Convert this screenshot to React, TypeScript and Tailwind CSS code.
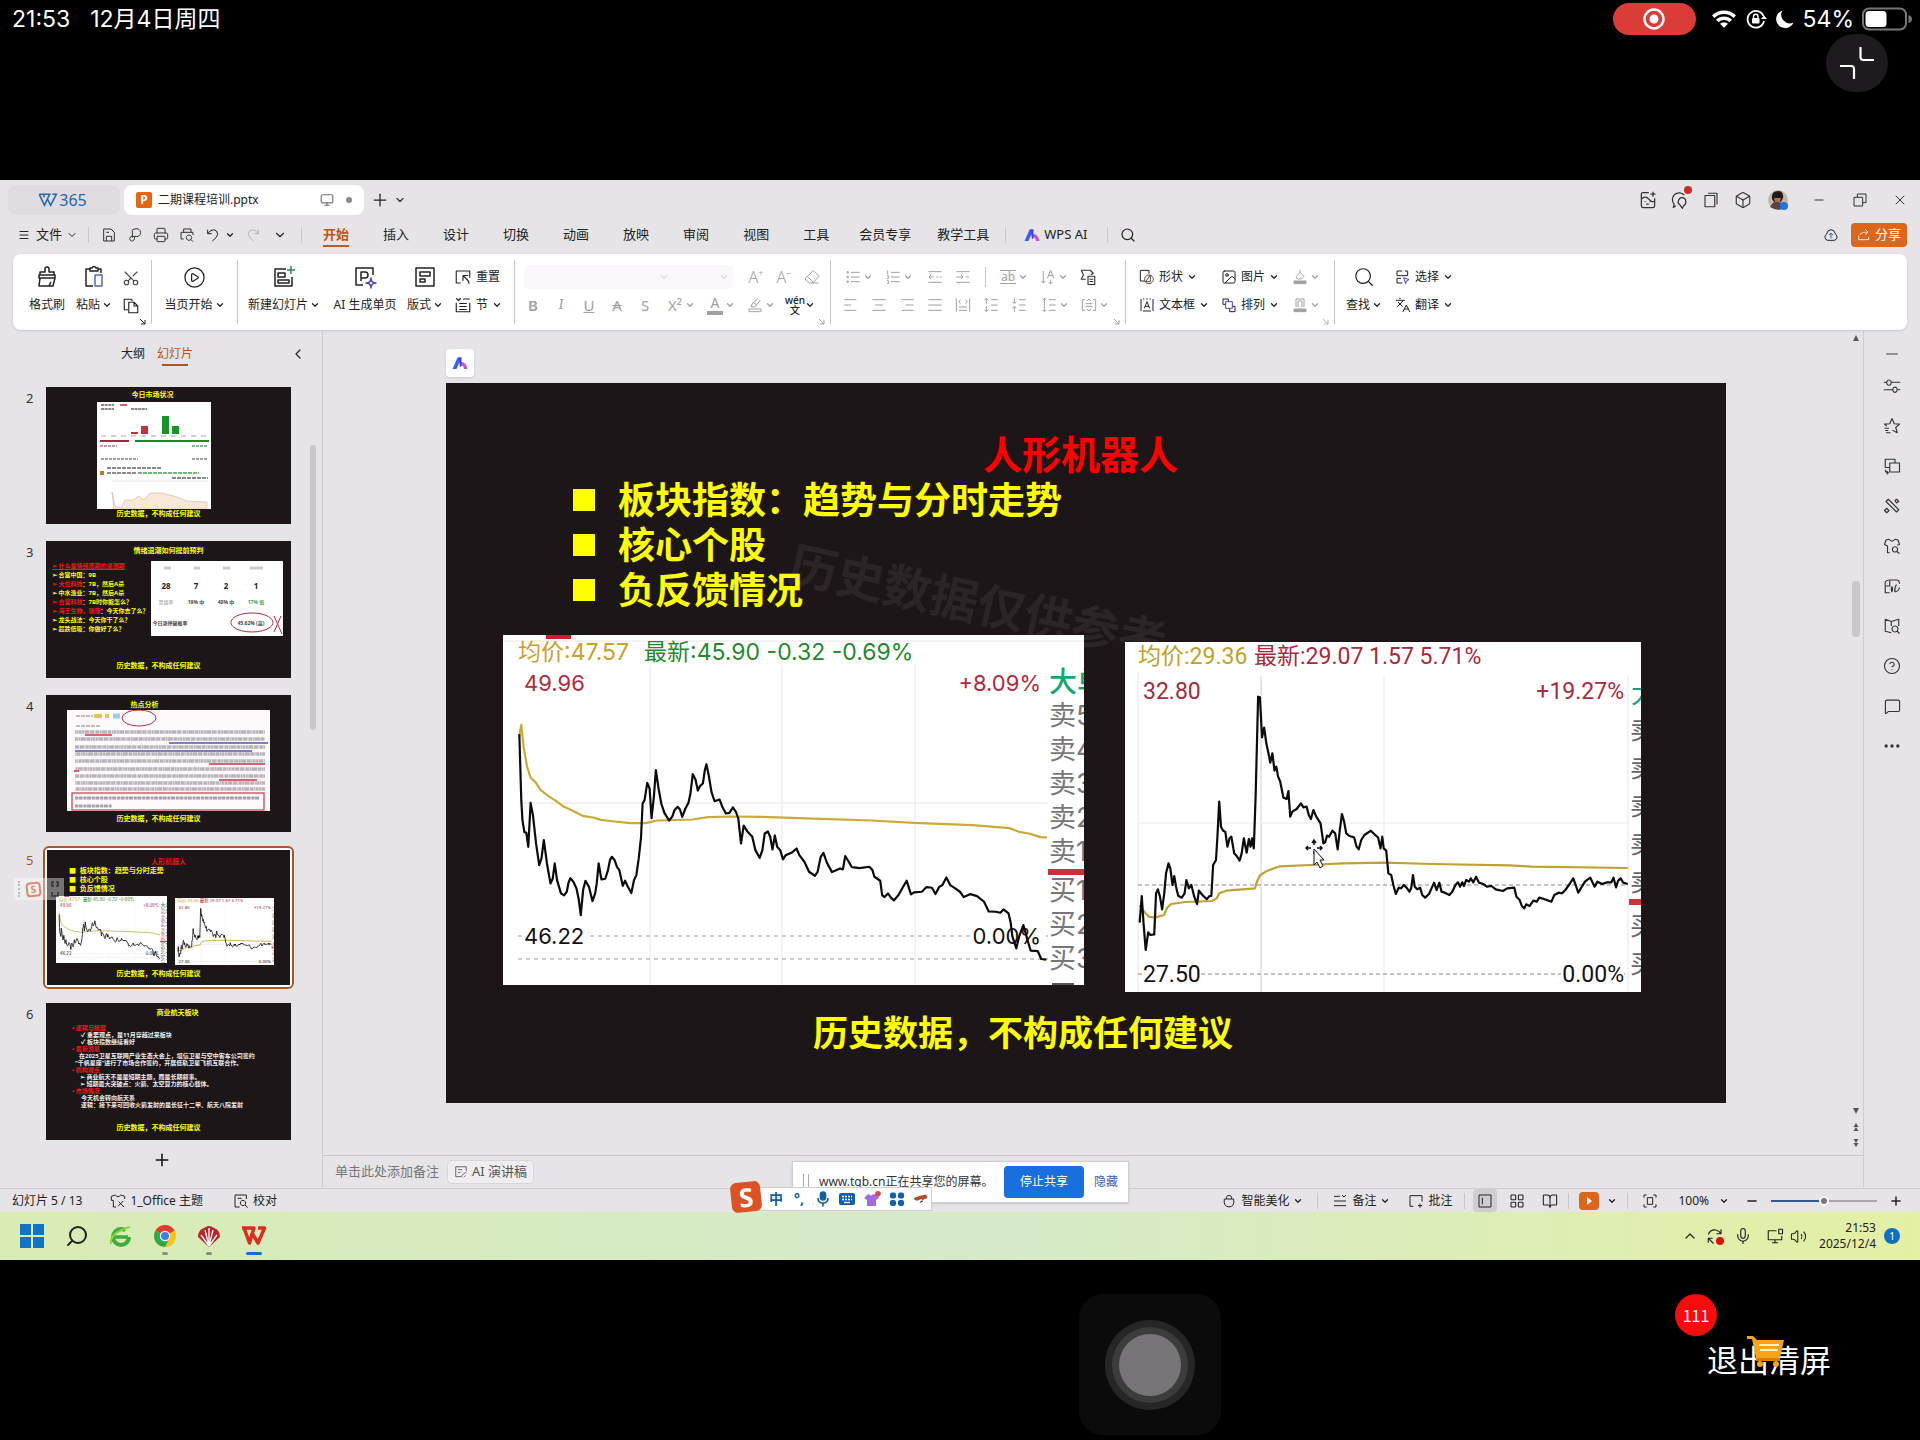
import type { ReactNode } from 'react';
import {
  BookOpen,
  Box,
  ChevronDown,
  ChevronLeft,
  ChevronUp,
  CircleHelp,
  CirclePlay,
  Eraser,
  Ellipsis,
  Image,
  Languages,
  LayoutGrid,
  Menu,
  MessageSquare,
  Mic,
  Minus,
  Monitor,
  Plus,
  Printer,
  Scissors,
  Search,
  Volume2,
  X,
} from 'lucide-react';

const UI_FONT = "font-['Noto_Sans','Noto_Sans_CJK_SC',sans-serif]";
const FOOTNOTE = '历史数据，不构成任何建议';

/* ---------- small building blocks ---------- */

interface GlyphProps {
  d: string;
  className?: string;
  accent?: string;
  accentClass?: string;
}

/** Thin line icon on a 24 grid; `accent` is a second path in its own colour. */
function Glyph({ d, className = 'size-5', accent, accentClass = 'stroke-[#4a46b8]' }: GlyphProps) {
  return (
    <svg
      viewBox="0 0 24 24"
      fill="none"
      stroke="currentColor"
      strokeWidth="1.5"
      strokeLinejoin="round"
      className={`shrink-0 ${className}`}
      aria-hidden="true"
    >
      <path d={d} />
      {accent && <path d={accent} className={accentClass} />}
    </svg>
  );
}

function Chev({ className = '' }: { className?: string }) {
  return <ChevronDown className={`size-2.5 shrink-0 ${className}`} strokeWidth={3} />;
}

function Sep({ className = 'h-5' }: { className?: string }) {
  return <span className={`w-px shrink-0 bg-[#c9c7ca] ${className}`} />;
}

interface BigButtonProps {
  icon: ReactNode;
  label: string;
  width: string;
  drop?: boolean;
}

function BigButton({ icon, label, width, drop }: BigButtonProps) {
  return (
    <button className={`flex shrink-0 flex-col items-center gap-1.5 ${width}`}>
      <span className="flex h-6 items-center">{icon}</span>
      <span className="flex h-5 items-center gap-0.5 whitespace-nowrap">
        {label}
        {drop && <Chev />}
      </span>
    </button>
  );
}

function RowButton({ icon, label, width = '', drop = true }: { icon: ReactNode; label: string; width?: string; drop?: boolean }) {
  return (
    <button className={`flex h-6 shrink-0 items-center gap-1 whitespace-nowrap ${width}`}>
      {icon}
      {label}
      {drop && <Chev />}
    </button>
  );
}

function Cell({ children, label }: { children: ReactNode; label: string }) {
  return (
    <button aria-label={label} className="flex h-6 w-7 shrink-0 items-center justify-center">
      {children}
    </button>
  );
}

function DropCell({ children, label }: { children: ReactNode; label: string }) {
  return (
    <button aria-label={label} className="flex h-6 w-10 shrink-0 items-center justify-center gap-0.5">
      {children}
      <Chev />
    </button>
  );
}

function AiLogo({ className = 'size-4' }: { className?: string }) {
  return (
    <svg viewBox="0 0 16 16" className={className} aria-hidden="true">
      <path d="M0.500 14 L5.500 2.500 H9.500 L4.500 14 Z" fill="#3a63e8" />
      <path d="M8 7 Q14 6 15.500 14 H12 Q11.500 10.500 9.500 10.500 L8 12 Z" fill="#c055d0" />
      <path d="M6.500 2.500 H9.500 L9.500 11 L8 12 Z" fill="#4a3fd6" />
    </svg>
  );
}

/* ---------- tablet status bar ---------- */

function DeviceBar() {
  return (
    <header className="h-45 font-['Inter','Noto_Sans_CJK_SC',sans-serif] text-white">
      <div className="flex h-9 items-center pt-0.5 pr-2 pl-3 text-[23px]">
        <span>21:53</span>
        <span className="ml-5">12月4日周四</span>
        <span className="ml-auto flex h-8 w-[83px] items-center justify-center rounded-full bg-[#dc3c37]">
          <svg viewBox="0 0 22 22" className="size-[22px]" aria-hidden="true">
            <circle cx="11" cy="11" r="9.500" fill="none" stroke="#fff" strokeWidth="2.400" />
            <circle cx="11" cy="11" r="4.500" fill="#fff" />
          </svg>
        </span>
        <svg viewBox="0 0 26 20" className="ml-[15px] h-5 w-[26px]" aria-hidden="true">
          <path d="M1 6.500 A17 17 0 0 1 25 6.500 L22.500 9 A13.500 13.500 0 0 0 3.500 9 Z" fill="#fff" />
          <path d="M5 10.700 A11.500 11.500 0 0 1 21 10.700 L18.600 13.200 A8 8 0 0 0 7.400 13.200 Z" fill="#fff" />
          <path d="M9 14.700 A6 6 0 0 1 17 14.700 L13 18.800 Z" fill="#fff" />
        </svg>
        <svg viewBox="0 0 22 22" className="ml-2 size-[22px]" fill="none" stroke="#fff" strokeWidth="1.800" aria-hidden="true">
          <path d="M18.500 8 A8.300 8.300 0 1 0 19 13" />
          <path d="M16 11 H22 L19 14.500 Z" fill="#fff" stroke="none" transform="rotate(180 19 11)" />
          <rect x="7" y="10" width="7.500" height="5.500" rx="1" fill="#fff" stroke="none" />
          <path d="M8.500 10 V8.500 A2.200 2.200 0 0 1 13 8.500 V10" strokeWidth="1.400" />
        </svg>
        <svg viewBox="0 0 20 20" className="ml-2 size-5" aria-hidden="true">
          <path d="M7.500 1.500 A9 9 0 1 0 18.500 13.500 A8.500 8.500 0 0 1 7.500 1.500 Z" fill="#fff" />
        </svg>
        <span className="ml-2">54%</span>
        <svg viewBox="0 0 50 24" className="ml-2 h-6 w-[50px]" aria-hidden="true">
          <rect x="1" y="1.500" width="43" height="21" rx="6" fill="none" stroke="#77777a" strokeWidth="2" />
          <rect x="3.500" y="4" width="21" height="16" rx="3.500" fill="#fff" />
          <path d="M46.500 8 Q50 9 50 12 Q50 15 46.500 16 Z" fill="#77777a" />
        </svg>
      </div>
      <div className="flex justify-end pr-8">
        <button aria-label="退出全屏" className="-mt-0.5 flex h-[58px] w-[62px] items-center justify-center rounded-full bg-[#1d1b1e]">
          <svg viewBox="0 0 34 34" className="size-[34px]" fill="none" stroke="#fff" strokeWidth="2.200" aria-hidden="true">
            <path d="M20.500 1 V11 Q20.500 14 23.500 14 H34" />
            <path d="M0 20 H11 Q14 20 14 23 V33" />
          </svg>
        </button>
      </div>
    </header>
  );
}

/* ---------- WPS title bar and menu ---------- */

function TitleBar() {
  return (
    <div className="flex h-10 items-center pl-2">
      <div className="flex h-[30px] w-28 items-center justify-center rounded-lg bg-[#dedcdf] pr-1 text-base text-[#2467b4]">
        <svg viewBox="0 0 22 16" className="h-3.5 w-[22px]" fill="none" stroke="currentColor" strokeWidth="1.800" aria-hidden="true">
          <path d="M1 1.500 H14 M1 1.500 L7 14 L12.500 2 M5.500 1.500 L7 5 M10 6.500 L14 14 L20.500 1.500 H16" />
        </svg>
        365
      </div>
      <div className="ml-1 flex h-[30px] w-60 items-center rounded-lg bg-white pr-2.5 pl-3 text-xs text-[#222]">
        <span className="flex h-4 w-4 items-center justify-center rounded-xs bg-[#e8650f] text-xs font-bold text-white">P</span>
        <span className="ml-1.5">二期课程培训.pptx</span>
        <Monitor className="ml-auto size-3.5 text-[#777]" strokeWidth={2} />
        <span className="mr-0.5 ml-3 size-1.5 rounded-full bg-[#8a8a8a]" />
      </div>
      <button aria-label="新建标签" className="ml-1.5 text-[#222]">
        <Plus className="size-5" strokeWidth={1.5} />
      </button>
      <ChevronDown className="ml-1 size-3 text-[#333]" strokeWidth={2.5} />
      <div className="ml-auto flex items-center text-[#333]">
        <Glyph
          className="size-5"
          d="M13 3 H6 Q4 3 4 5 V19 Q4 21 6 21 H18 Q20 21 20 19 V10 M18 2 V8 M15 5 H21 M4 11 Q9 6 13 11 T20 13 M8 14 H9 M14 14 H15 M10 17 H13"
        />
        <span className="relative ml-3">
          <Glyph className="size-5" d="M7 19 L4 21 L5 17 A8 8 0 1 1 17 6 M14 9 Q19 9 19 14 Q19 18 16 19 L15 22 L12 18 Q9 16 10 13 Q11 9 14 9 Z" />
          <span className="absolute -top-1 -right-0.5 size-2 rounded-full bg-[#d02a2a]" />
        </span>
        <Glyph className="ml-3 size-[18px]" d="M8 3 H20 V18 M4 6 H17 V21 H4 Z" />
        <Box className="ml-3.5 size-[18px]" strokeWidth={1.5} />
        <svg viewBox="0 0 20 20" className="ml-4 size-5" aria-hidden="true">
          <circle cx="10" cy="10" r="10" fill="#c9b8a8" />
          <path d="M4 9 Q3 1 10 1 Q16 1 15 8 L13 12 H6 Z" fill="#221a1a" />
          <path d="M6 8 H13 L12 12 H7 Z" fill="#a8745a" />
          <path d="M2 17 Q5 11 10 12 Q15 12 17 18 Q10 22 2 17 Z" fill="#5a4440" />
          <circle cx="16" cy="16" r="4" fill="#1e74e6" />
        </svg>
        <button aria-label="最小化" className="ml-6">
          <Minus className="size-3.5" strokeWidth={1.8} />
        </button>
        <button aria-label="还原" className="ml-[26px]">
          <Glyph className="size-4" d="M8 8 V3 H21 V16 H16 M3 8 H16 V21 H3 Z" />
        </button>
        <button aria-label="关闭" className="mr-3 ml-6">
          <X className="size-4" strokeWidth={1.5} />
        </button>
      </div>
    </div>
  );
}

const MENU_TABS = ['插入', '设计', '切换', '动画', '放映', '审阅', '视图', '工具', '会员专享', '教学工具'];

function MenuRow() {
  return (
    <nav className="flex h-[34px] items-center pr-[13px] pb-1 pl-[18px] text-[13px] text-[#222]">
      <Menu className="size-3" strokeWidth={2} />
      <span className="ml-1.5">文件</span>
      <ChevronDown className="ml-1 size-3" strokeWidth={2} />
      <Sep className="ml-2.5 h-4" />
      <div className="ml-3 flex items-center gap-2.5 text-[#333]">
        <Glyph className="size-4" d="M4 3 H15 L20 8 V21 H4 Z M8 21 V14 H16 V21 M8 8 H12" />
        <Glyph className="size-4" d="M8 16 V5 Q8 3 12 3 A6 6 0 1 1 12 14 H8 A3.500 3.500 0 1 0 10 20 Q12 18 11 14" />
        <Printer className="size-4" strokeWidth={1.5} />
        <Glyph className="size-4" d="M7 8 V3 H18 V8 M7 18 H3 V8 H21 V12 M15 12 A4 4 0 1 1 14.900 12 M18 19 L21 22" />
      </div>
      <Glyph className="ml-2.5 size-4" d="M4 4 V10 H10 M4 10 Q8 4 13 4 Q19 5 19 11 Q18 16 11 21" />
      <Chev className="ml-1" />
      <Glyph className="ml-2.5 size-4 text-[#b5b3b6]" d="M20 4 V10 H14 M20 10 Q16 4 11 4 Q5 5 5 11 Q6 16 13 21" />
      <ChevronDown className="ml-3 size-3.5" strokeWidth={2} />
      <Sep className="ml-3.5 h-4" />
      <a href="#start" className="ml-[21px] border-b-2 border-[#b1622b] pt-0.5 font-bold text-[#c2560f]">
        开始
      </a>
      <div className="ml-[34px] flex gap-[34px] whitespace-nowrap">
        {MENU_TABS.map((tab) => (
          <a key={tab} href="#tab" className={tab === '会员专享' ? '-ml-1' : tab === '教学工具' ? '-ml-2' : ''}>
            {tab}
          </a>
        ))}
      </div>
      <Sep className="ml-4 h-4" />
      <AiLogo className="ml-[18px] size-4" />
      <span className="ml-1">WPS AI</span>
      <Sep className="ml-5 h-4" />
      <Search className="ml-3 size-4" strokeWidth={1.8} />
      <Glyph className="ml-auto size-4" d="M7 20 A5 5 0 0 1 5 11 Q7 4 12 4 Q17 4 19 11 A5 5 0 0 1 17 20 Z" accent="M12 17 V9 M9 12 L12 9 L15 12" accentClass="stroke-[#2e65c8]" />
      <button className="ml-3 flex h-6 w-14 items-center justify-center gap-1 rounded bg-[#dd661b] text-white">
        <Glyph className="size-3.5" d="M3 13 V20 H20 V15 M5 12 Q7 7 18 7 M14 2 L19 7 L14 12" />
        分享
      </button>
    </nav>
  );
}

/* ---------- ribbon ---------- */

function AlignIcon({ d }: { d: string }) {
  return <Glyph className="size-4" d={d} />;
}

/** Small diagonal arrow in a group's lower right corner. */
function Launcher() {
  return (
    <svg viewBox="0 0 8 8" className="absolute right-1 bottom-1 size-2" fill="none" stroke="currentColor" aria-hidden="true">
      <path d="M1 1 L6 6 M6 2 V6 H2" />
    </svg>
  );
}

function Ribbon() {
  return (
    <section className="mx-[13px] flex h-[76px] overflow-hidden rounded-lg bg-white text-xs text-[#222] shadow">
      <div className="relative flex w-[138px] shrink-0 pt-[11px] pl-[9px]">
        <BigButton
          width="w-[50px]"
          label="格式刷"
          icon={<Glyph className="size-6" d="M5 10 V7 H10 V3 Q12 1 14 3 V7 H19 V10 M4 10 H20 V13 H4 Z M5 13 L4 21 H18 L20 13 M14 21 L16 17" />}
        />
        <BigButton
          width="w-11"
          label="粘贴"
          drop
          icon={<Glyph className="size-6" d="M8 4 H4 V21 H11 M16 4 H19 V8 M8 3 H10 Q12 0 14 3 H16 V6 H8 Z" accent="M13 10 H20 V21 H13 Z" accentClass="stroke-[#5a6aa0]" />}
        />
        <div className="flex w-[30px] flex-col items-center gap-2.5 pt-1">
          <Scissors className="size-[18px] -rotate-90 text-[#444]" strokeWidth={1.5} />
          <Glyph className="size-[18px]" d="M8 17 H3 V3 H12 L14 5 M9 7 H16 L21 12 V21 H9 Z M16 7 V12 H21" />
        </div>
        <Launcher />
      </div>
      <Sep className="my-1.5" />
      <div className="flex w-[85px] shrink-0 justify-center pt-[11px]">
        <BigButton width="w-20" label="当页开始" drop icon={<CirclePlay className="size-[23px]" strokeWidth={1.3} />} />
      </div>
      <Sep className="my-1.5" />
      <div className="flex w-[276px] shrink-0 pt-[11px] pl-0.5">
        <BigButton
          width="w-[88px]"
          label="新建幻灯片"
          drop
          icon={<Glyph className="size-6" d="M14 4 H3 V21 H20 V12 M6 8 H13 V12 H6 Z M6 15 H17 V18 H6 Z" accent="M19 1 V9 M15 5 H23" accentClass="stroke-[#2a8a5a]" />}
        />
        <BigButton
          width="w-[74px]"
          label="AI 生成单页"
          icon={<Glyph className="size-6" d="M10 20 H3 V3 H20 V10 M8 16 V7 H12 Q15 7 15 10 Q15 13 12 13 H8" accent="M18 13 Q18 18 23 18 Q18 18 18 23 Q18 18 13 18 Q18 18 18 13 Z" />}
        />
        <BigButton width="w-[46px]" label="版式" drop icon={<Glyph className="size-6" d="M3 3 H21 V21 H3 Z M7 7 H17 V11 H7 Z M7 14 H12 V17 H7 Z" />} />
        <div className="flex flex-col gap-1 pl-1.5">
          <RowButton drop={false} label="重置" icon={<Glyph className="size-[18px]" d="M9 20 H3 V4 H21 V13 M12 10 V17 M12 10 H19 M12 10 L18 16 Q20 18 20 21" />} />
          <RowButton label="节" icon={<Glyph className="size-[18px]" d="M3 3 L6 6 L9 3 M12 4 H21 M3 9 V21 H21 V9 M7 10 H17 M7 14 H17 M7 18 H17" />} />
        </div>
      </div>
      <Sep className="my-1.5" />
      <div className="relative w-[315px] shrink-0 pt-[11px] text-[#a2a0a3]">
        <div className="flex items-center">
          <div className="ml-[9px] flex h-6 w-[209px] items-center justify-between rounded bg-[#faf8fb] pr-1 pl-[135px] text-[#dddbde]">
            <Chev />
            <Chev />
          </div>
          <span className="w-[9px]" />
          <Cell label="增大字号">
            <span className="text-base font-light">A⁺</span>
          </Cell>
          <Cell label="减小字号">
            <span className="text-base font-light">A⁻</span>
          </Cell>
          <Cell label="清除格式">
            <Eraser className="size-4" strokeWidth={1.5} />
          </Cell>
        </div>
        <div className="mt-1 flex items-center pl-1 text-[15px]">
          <Cell label="加粗">
            <span className="font-semibold">B</span>
          </Cell>
          <Cell label="倾斜">
            <span className="font-serif italic">I</span>
          </Cell>
          <Cell label="下划线">
            <span className="underline">U</span>
          </Cell>
          <Cell label="删除线">
            <span className="line-through">A</span>
          </Cell>
          <Cell label="阴影">
            <span>S</span>
          </Cell>
          <span className="w-0.5" />
          <DropCell label="上标">
            <span className="w-4">X²</span>
          </DropCell>
          <DropCell label="字体颜色">
            <span className="w-4 border-b-4 border-[#a2a0a3] text-center text-sm leading-4">A</span>
          </DropCell>
          <DropCell label="突出显示">
            <Glyph className="size-4" d="M3 18 H21 V22 H3 Z M6 14 L9 8 L15 12 L11 15 Z M11 8 L16 2 M15 11 L20 5" />
          </DropCell>
          <div className="text-[#222]">
            <DropCell label="拼音指南">
              <span className="flex w-4 flex-col items-center text-[10px] leading-[10px] font-medium">
                <span>wén</span>
                <span>文</span>
              </span>
            </DropCell>
          </div>
        </div>
        <Launcher />
      </div>
      <Sep className="my-1.5" />
      <div className="relative w-[294px] shrink-0 pt-[11px] text-[#a2a0a3]">
        <div className="flex items-center pl-2">
          <DropCell label="项目符号">
            <AlignIcon d="M3 4 H5 V6 H3 Z M3 11 H5 V13 H3 Z M3 18 H5 V20 H3 Z M9 5 H22 M9 12 H22 M9 19 H22" />
          </DropCell>
          <DropCell label="编号">
            <AlignIcon d="M4 2 V8 M3 10 H5 V14 H3 M3 17 H5 V22 H3 M9 5 H22 M9 12 H22 M9 19 H22" />
          </DropCell>
          <span className="w-0.5" />
          <Cell label="减少缩进">
            <AlignIcon d="M2 4 H22 M2 20 H22 M3 12 H10 M6 9 L3 12 L6 15 M14 12 H17 M19 12 H22" />
          </Cell>
          <Cell label="增加缩进">
            <AlignIcon d="M2 4 H22 M2 20 H22 M2 12 H12 M9 9 L12 12 L9 15 M16 12 H21" />
          </Cell>
          <Sep className="mx-2 h-5" />
          <DropCell label="文字效果">
            <span className="w-4 border-y border-[#a2a0a3] text-xs leading-3">ab</span>
          </DropCell>
          <DropCell label="文字方向">
            <AlignIcon d="M5 3 V21 M2 18 L5 21 L8 18 M11 14 L16 2 L21 14 M13 10 H19 M16 16 V22 M13 20 L16 22 L19 20" />
          </DropCell>
          <Cell label="转换图示">
            <Glyph className="size-[18px] text-[#333]" d="M3 3 H15 L19 7 L16 9 M3 3 L6 9 L3 15 H9 M12 11 H21 V22 H12 Z M14 15 H19 M14 18 H19" />
          </Cell>
        </div>
        <div className="mt-1 flex items-center pl-1.5">
          <Cell label="左对齐">
            <AlignIcon d="M2 4 H20 M2 12 H12 M2 20 H20" />
          </Cell>
          <Cell label="居中">
            <AlignIcon d="M2 4 H22 M6 12 H18 M2 20 H22" />
          </Cell>
          <Cell label="右对齐">
            <AlignIcon d="M4 4 H22 M10 12 H22 M4 20 H22" />
          </Cell>
          <Cell label="两端对齐">
            <AlignIcon d="M2 4 H22 M2 12 H22 M2 20 H22" />
          </Cell>
          <Cell label="分散对齐">
            <AlignIcon d="M2 2 V22 M22 2 V22 M6 15 H18 M6 20 H18 M8 4 L6 7 L8 10 M16 4 L18 7 L16 10" />
          </Cell>
          <Cell label="增加间距">
            <AlignIcon d="M5 10 V2 M2 5 L5 2 L8 5 M5 14 V22 M2 19 L5 22 L8 19 M12 4 H22 M12 12 H22 M12 20 H22" />
          </Cell>
          <Cell label="减少间距">
            <AlignIcon d="M5 2 V10 M2 7 L5 10 L8 7 M5 22 V14 M2 17 L5 14 L8 17 M12 4 H22 M12 12 H22 M12 20 H22" />
          </Cell>
          <span className="w-0.5" />
          <DropCell label="行距">
            <AlignIcon d="M5 2 V22 M2 5 L5 2 L8 5 M2 19 L5 22 L8 19 M12 4 H22 M12 12 H22 M12 20 H22" />
          </DropCell>
          <DropCell label="对齐文本">
            <AlignIcon d="M6 4 H2 V20 H6 M18 4 H22 V20 H18 M7 10 H17 M7 14 H17 M9 6 L12 3 L15 6 M9 18 L12 21 L15 18" />
          </DropCell>
        </div>
        <Launcher />
      </div>
      <Sep className="my-1.5" />
      <div className="relative w-[208px] shrink-0 pt-[11px] pl-[13px]">
        <div className="flex items-center">
          <RowButton
            width="w-[82px]"
            label="形状"
            icon={<Glyph className="size-4" d="M9 18 H2 V2 H15 V7" accent="M15 9 A6.500 6.500 0 1 1 14.900 9 M10 19 L17 9 V19 Z" accentClass="stroke-[#5c4a40]" />}
          />
          <RowButton width="w-[65px]" label="图片" icon={<Image className="size-4" strokeWidth={1.5} />} />
          <span className="text-[#a2a0a3]">
            <DropCell label="填充">
              <Glyph className="size-4" d="M6 12 L12 5 L18 11 L14 15 H8 Z M12 5 V1" accent="M3 18 H21 V22 H3 Z" accentClass="fill-[#a2a0a3] stroke-[#a2a0a3]" />
            </DropCell>
          </span>
        </div>
        <div className="mt-1 flex items-center">
          <RowButton width="w-[82px]" label="文本框" icon={<Glyph className="size-4" d="M3 3 V21 M21 3 V21 M6 3 H8 M11 3 H13 M16 3 H18 M6 21 H18 M8 17 L12 7 L16 17 M9 14 H15" />} />
          <RowButton width="w-[65px]" label="排列" icon={<Glyph className="size-4" d="M7 11 H3 V3 H11 V7 M17 14 H21 V22 H13 V18" accent="M7 7 H17 V17 H7 Z" />} />
          <span className="text-[#a2a0a3]">
            <DropCell label="轮廓">
              <Glyph className="size-4" d="M6 15 V3 H18 V15 M9 15 V6 H15 V15" accent="M3 18 H21 V22 H3 Z" accentClass="fill-[#a2a0a3] stroke-[#a2a0a3]" />
            </DropCell>
          </span>
        </div>
        <span className="text-[#b5b3b6]">
          <Launcher />
        </span>
      </div>
      <Sep className="my-1.5" />
      <div className="flex pt-[11px]">
        <BigButton width="w-[58px]" label="查找" drop icon={<Search className="size-[22px]" strokeWidth={1.3} />} />
        <div className="flex flex-col gap-1 pl-0.5">
          <RowButton label="选择" icon={<Glyph className="size-4" d="M11 3 H3 V10 H19 V3 H15 M3 14 V21 H11 M3 14 H9" accent="M13 13 L21 16 L17 18 L16 22 Z" />} />
          <RowButton label="翻译" icon={<Languages className="size-4" strokeWidth={1.5} />} />
        </div>
      </div>
    </section>
  );
}

/* ---------- intraday charts ---------- */

// Both charts keep their traces in their own drawing units; the nested svg maps them to the card.
const INDEX_PRICE =
  '75,342 80,540 83,600 88,636 93,638 98,680 104,548 110,585 118,670 126,735 132,715 138,660 146,730 155,790 161,775 166,730 172,780 182,820 190,826 197,815 201,790 206,774 214,785 222,805 228,840 233,885 239,810 245,782 254,800 263,843 270,820 274,790 279,730 286,778 296,776 303,750 308,720 313,710 320,720 326,740 332,750 341,797 347,782 354,800 363,819 370,780 376,765 382,715 388,650 392,550 397,540 401,510 404,488 410,505 415,594 421,530 426,450 433,505 440,550 448,578 460,601 468,590 474,570 482,560 488,568 494,590 502,565 510,548 515,520 521,462 528,478 534,511 540,497 547,490 552,450 556,432 562,465 569,515 577,543 590,538 597,560 606,580 615,578 624,562 632,575 638,595 645,670 652,616 662,635 674,650 682,690 693,713 700,690 706,640 714,634 720,650 726,688 732,646 738,680 746,690 753,718 760,705 775,698 788,685 795,705 808,725 820,755 835,767 842,755 850,710 857,698 866,728 879,756 900,745 907,748 913,708 922,725 930,741 950,744 975,740 983,750 988,770 1003,782 1008,825 1014,831 1023,820 1030,832 1038,841 1050,825 1062,800 1071,782 1082,823 1090,817 1110,815 1122,801 1136,803 1145,822 1155,800 1163,795 1173,772 1183,795 1196,805 1208,815 1218,831 1235,822 1252,828 1270,845 1282,874 1300,875 1312,878 1320,868 1333,880 1338,905 1343,950 1353,985 1360,950 1371,915 1377,940 1383,965 1390,992 1408,993 1417,1017 1430,1019';
const INDEX_AVERAGE =
  '75,345 80,313 86,380 95,440 104,473 116,485 130,510 150,528 170,543 190,560 215,573 240,588 265,592 285,599 320,604 360,609 400,609 430,601 520,598 560,591 620,589 700,590 850,596 980,601 1090,608 1240,615 1335,624 1360,635 1385,640 1415,651 1432,652';
const STOCK_PRICE =
  '82,878 88,798 93,880 99,960 106,907 112,915 123,913 128,790 133,778 139,800 145,838 151,790 156,730 163,700 168,715 174,765 179,738 184,770 190,797 200,803 208,790 213,750 220,775 227,765 235,800 243,822 248,782 258,795 270,808 278,798 283,798 288,705 296,690 300,620 305,515 310,590 316,602 322,605 328,650 334,625 339,620 347,670 354,678 362,692 368,670 374,625 382,668 388,627 393,650 397,625 402,655 407,500 411,330 414,200 419,202 425,322 431,293 437,340 443,370 448,398 454,370 460,422 465,410 470,440 476,455 485,503 494,507 499,483 504,560 510,545 522,537 534,520 541,532 550,530 556,555 562,567 569,540 577,560 589,580 593,610 597,640 602,637 607,617 613,620 622,602 630,610 637,658 643,600 649,552 655,575 661,610 670,618 683,622 690,650 696,658 703,630 712,615 730,602 742,615 750,622 757,655 762,620 766,655 773,662 779,730 787,735 793,765 800,792 808,773 815,775 822,765 830,773 838,785 843,775 848,735 853,770 860,778 868,773 874,795 882,803 893,792 900,775 907,758 914,780 922,758 928,785 937,788 950,795 958,785 967,765 974,757 980,770 986,757 991,768 997,750 1005,755 1010,745 1017,757 1025,740 1033,758 1045,762 1055,770 1068,768 1080,778 1100,783 1112,775 1132,773 1138,800 1147,810 1153,828 1160,835 1165,823 1175,828 1185,812 1195,815 1202,803 1215,807 1236,815 1244,795 1256,788 1266,790 1275,780 1288,760 1297,745 1304,765 1311,788 1320,772 1330,755 1338,748 1345,743 1357,770 1365,755 1378,762 1392,757 1404,757 1410,743 1417,772 1423,752 1430,745 1437,758 1450,762';
const STOCK_AVERAGE =
  '82,825 95,845 108,860 125,863 150,855 160,832 170,822 210,816 285,813 298,805 305,790 325,782 405,775 412,752 420,735 440,722 475,709 560,705 650,700 770,698 900,702 1120,706 1180,710 1450,714';

function Trace({ points, stroke, thin }: { points: string; stroke: string; thin: boolean }) {
  return <polyline points={points} fill="none" stroke={stroke} strokeWidth={thin ? 0.8 : 2.2} strokeLinejoin="round" vectorEffect="non-scaling-stroke" />;
}

const INDEX_BOOK: Array<[string, number]> = [
  ['卖5', 90],
  ['卖4', 124],
  ['卖3', 158],
  ['卖2', 192],
  ['卖1', 226],
  ['买1', 265],
  ['买2', 299],
  ['买3', 333],
];

function IndexChart({ thin = false, className }: { thin?: boolean; className: string }) {
  return (
    <svg viewBox="0 0 581 350" className={`shrink-0 bg-white ${className}`} fontFamily="Inter, 'Noto Sans CJK SC', sans-serif" fontSize="22" fontWeight="400">
      <path d="M43 0 H68 V4 H43 Z" fill="#c8202c" />
      <path d="M0 6 H581" stroke="#ece6ea" />
      <path d="M147 30 V350 M279 30 V350 M412 30 V350 M16 168 H545" stroke="#f5edf3" strokeWidth="1.500" />
      <path d="M15 301 H545 M15 324 H545" stroke="#9a9a9a" strokeWidth="1.200" strokeDasharray="4 4" />
      <text x="15" y="25" fill="#c9a227" fontSize="23">
        均价:47.57
      </text>
      <text x="141" y="25" fill="#1f8a2b" fontSize="23">
        最新:45.90 -0.32 -0.69%
      </text>
      <text x="21" y="56" fill="#b02a3c">49.96</text>
      <text x="538" y="56" fill="#b02a3c" textAnchor="end">+8.09%</text>
      <rect x="20" y="290" width="63" height="22" fill="#fff" />
      <rect x="470" y="290" width="69" height="22" fill="#fff" />
      <text x="21" y="309" fill="#111">46.22</text>
      <text x="538" y="309" fill="#111" textAnchor="end">0.00%</text>
      <text x="546" y="57" fill="#17a673" fontSize="28" fontWeight="500">大单</text>
      {INDEX_BOOK.map(([label, y]) => (
        <text key={label} x="546" y={y} fill="#77777b" fontSize="27">
          {label}
        </text>
      ))}
      <path d="M545 234 H581 V240 H545 Z" fill="#c8303a" />
      <path d="M549 349 H571" stroke="#555" strokeWidth="2" />
      <svg x="0" y="0" width="581" height="350" viewBox="33 44 1494 1051" preserveAspectRatio="none">
        <Trace points={INDEX_AVERAGE} stroke="#ccaa3a" thin={thin} />
        <Trace points={INDEX_PRICE} stroke="#0b0b0b" thin={thin} />
      </svg>
    </svg>
  );
}

const STOCK_BOOK: Array<[string, number]> = [
  ['卖', 97],
  ['卖', 135],
  ['卖', 173],
  ['卖', 211],
  ['卖', 249],
  ['买', 293],
  ['买', 331],
];

function StockChart({ thin = false, className }: { thin?: boolean; className: string }) {
  return (
    <svg viewBox="0 0 516 350" className={`shrink-0 bg-white ${className}`} fontFamily="Roboto, 'Noto Sans CJK SC', sans-serif" fontSize="23" fontWeight="400">
      <path d="M136 34 V350" stroke="#e2dce4" strokeWidth="1.500" />
      <path d="M13 30 V350 M259 34 V350 M13 181 H503 M503 34 V350" stroke="#f1e8ef" strokeWidth="1.200" />
      <path d="M13 243 H503 M13 332 H503" stroke="#8a8a8a" strokeWidth="1.200" strokeDasharray="4 3" />
      <text x="13" y="22" fill="#c2a22a">均价:29.36</text>
      <text x="129" y="22" fill="#a82a3c">最新:29.07 1.57 5.71%</text>
      <text x="18" y="57" fill="#a82a3c">32.80</text>
      <text x="499" y="57" fill="#a82a3c" textAnchor="end">+19.27%</text>
      <rect x="18" y="322" width="58" height="22" fill="#fff" />
      <rect x="436" y="322" width="63" height="22" fill="#fff" />
      <text x="18" y="340" fill="#111">27.50</text>
      <text x="499" y="340" fill="#111" textAnchor="end">0.00%</text>
      <text x="506" y="61" fill="#1a9c80" fontSize="27">大</text>
      {STOCK_BOOK.map(([label, y]) => (
        <text key={y} x="505" y={y} fill="#66666a" fontSize="25">
          {label}
        </text>
      ))}
      <path d="M504 257 H516 V263 H504 Z" fill="#d0303a" />
      <svg x="0" y="0" width="516" height="350" viewBox="41 36 1446 1050" preserveAspectRatio="none">
        <Trace points={STOCK_AVERAGE} stroke="#c0a232" thin={thin} />
        <Trace points={STOCK_PRICE} stroke="#0b0b0b" thin={thin} />
      </svg>
      {!thin && (
        <g stroke="#111" strokeWidth="1.500" fill="none">
          <path d="M189 199 V203 M189 209 V212 M181 206 H186 M192 206 H197 M187 201 L189 198 L191 201 M183 204 L181 206 L183 208 M195 204 L197 206 L195 208" />
          <path d="M189 207 V223 L192 220 L195 226 L198 224 L195 218 H199 Z" fill="#fff" strokeWidth="1" />
        </g>
      )}
    </svg>
  );
}

/* ---------- slide thumbnails ---------- */

function ThumbFrame({ title, children, titleClass = '' }: { title: string; children: ReactNode; titleClass?: string }) {
  return (
    <div className="flex h-full flex-col overflow-hidden bg-[#1c1619] text-[7px] leading-2 font-bold">
      <p className={`pt-1.5 text-center text-[#ffff00] ${titleClass}`}>{title}</p>
      {children}
      <p className="mt-auto pr-5 pb-2 text-center text-[#ffff00]">{FOOTNOTE}</p>
    </div>
  );
}

const MARKET_BARS: Array<[number, number, string]> = [
  [38, 2, '#c8303a'],
  [48, 8, '#c8303a'],
  [69, 18, '#17932a'],
  [79, 8, '#17932a'],
];

function MarketThumb() {
  return (
    <div className="flex h-full flex-col items-center overflow-hidden bg-[#1c1619] text-[7px] leading-2 font-bold text-[#ffff00]">
      <p className="pt-1 pr-8">今日市场状况</p>
      <svg viewBox="0 0 114 107" className="mt-[3px] mr-[30px] h-[107px] w-[114px] shrink-0 bg-white">
        <path d="M4 3 H17 M4 7 H17 M34 7 H50" stroke="#666" strokeWidth="1.500" strokeDasharray="3 .6" />
        <path d="M23 3 H30" stroke="#c8303a" strokeWidth="1.500" />
        {MARKET_BARS.map(([x, h, fill]) => (
          <rect key={x} x={x - 4} y={32 - h} width="7" height={h} fill={fill} />
        ))}
        <path d="M4 34 H112" stroke="#aaa" strokeDasharray="5 5" />
        <path d="M3 39 H32" stroke="#a8243a" strokeWidth="2" />
        <path d="M38 39 H112" stroke="#1c8a2c" strokeWidth="2" />
        <path d="M3 44 H20 M95 44 H111 M4 57 H41 M95 57 H111" stroke="#888" strokeWidth="1.500" strokeDasharray="3 1" />
        <path d="M10 66 H65 M10 71 H40 M75 76 H111" stroke="#666" strokeWidth="1.500" strokeDasharray="4 1" />
        <path d="M41 71 H102" stroke="#4c9a50" strokeWidth="1.500" strokeDasharray="4 1" />
        <rect x="3" y="69" width="4" height="4" fill="#c07a2a" />
        <path d="M15 79 H111" stroke="#ddd" strokeWidth=".8" />
        <path d="M15 90 L18 104 L24 106 L28 98 L36 98 L42 94 L47 98 L53 91 L65 91 L80 95 L90 99 L110 100 V107 H17 Z" fill="#f8e8d8" stroke="#c8a888" strokeWidth=".5" />
      </svg>
      <p className="mt-px pr-5">{FOOTNOTE}</p>
    </div>
  );
}

const MOOD_LINES: Array<[string, string]> = [
  ['合富中国', '：9B'],
  ['大位科技', '：7B，然后A杀'],
  ['中水渔业', '：7B，然后A杀'],
  ['合富科技', '：7B时你能怎么？'],
  ['海王生物，瑞康', '：今天你去了么？'],
  ['龙头战法', '：今天你干了么？'],
  ['超跌低吸', '：你做好了么？'],
];
const MOOD_RED = [1, 3, 4];

function MoodThumb() {
  return (
    <ThumbFrame title="情绪退潮如何提前预判">
      <div className="flex justify-between pt-1.5 pr-2 pl-1.5">
        <ul className="w-[99px] pt-px text-[6px] leading-[9px] whitespace-nowrap text-[#ffff00]">
          <li className="text-[#f01818] underline">➢ 什么是情绪周期的退潮期</li>
          {MOOD_LINES.map(([head, rest], i) => (
            <li key={head}>
              <span className={MOOD_RED.includes(i) ? 'text-[#f01818]' : ''}>➢ {head}</span>
              {rest}
            </li>
          ))}
        </ul>
        <svg viewBox="0 0 132 75" className="h-[75px] w-[132px] shrink-0 bg-white" fontFamily="'Noto Sans', 'Noto Sans CJK SC', sans-serif" textAnchor="middle">
          <path d="M13 7 H20 M43 7 H49 M72 7 H79 M99 7 H112" stroke="#ccc" strokeWidth="3" />
          <g fontSize="8" fill="#222">
            <text x="15" y="28">28</text>
            <text x="45" y="28">7</text>
            <text x="75" y="28">2</text>
            <text x="105" y="28">1</text>
          </g>
          <g fontSize="5" fill="#444">
            <text x="15" y="43" fill="#bbb">晋级率</text>
            <text x="45" y="43">19% 中</text>
            <text x="75" y="43">40% 中</text>
            <text x="105" y="43" fill="#4c9a50">17% 低</text>
            <text x="19" y="64">今日涨停破板率</text>
            <text x="100" y="64">45.62% (高)</text>
          </g>
          <path d="M101 52 A21 9.500 0 1 1 100.900 52 M123 55 L131 73 M130 55 L123 71" fill="none" stroke="#b02840" />
        </svg>
      </div>
    </ThumbFrame>
  );
}

const HOTSPOT_ROWS = [22, 29, 37, 44, 51, 59, 66, 73, 79];

function HotspotThumb() {
  return (
    <div className="flex h-full flex-col items-center overflow-hidden bg-[#1c1619] text-[7px] leading-2 font-bold text-[#ffff00]">
      <p className="pt-1.5 pr-12">热点分析</p>
      <svg viewBox="0 0 203 101" className="mt-px mr-px h-[101px] w-[203px] shrink-0 bg-[#fdfafc]">
        <path d="M9 6 H26 M9 16 H33" stroke="#aaa" strokeWidth="1.500" strokeDasharray="4 1" />
        <path d="M27 6 H35 M38 6 H42" stroke="#e6c850" strokeWidth="4" />
        <path d="M46 6 H53" stroke="#9ccbe6" strokeWidth="5" />
        {HOTSPOT_ROWS.map((y) => (
          <path key={y} d={`M8 ${y} H198`} stroke="#b8b4bb" strokeWidth="3.500" strokeDasharray="3 .5 2 .4 5 .6 4 .5 1 .4" strokeDashoffset={y * 3} />
        ))}
        <path d="M18 25 H45 M142 54 H198 M152 70 H190 M7 61 H12" stroke="#d03040" strokeWidth="1.500" />
        <path d="M102 33 H201 M8 41 H185" stroke="#5a50b8" strokeWidth="1.500" />
        <rect x="5" y="83" width="192" height="17" fill="#fdfafc" stroke="#c83a4a" strokeWidth="1.200" />
        <path d="M8 88 H193 M8 96 H45" stroke="#a5a1a8" strokeWidth="3" strokeDasharray="3 .6 4 .8" />
        <ellipse cx="72" cy="8" rx="17" ry="8" fill="none" stroke="#b83048" />
      </svg>
      <p className="mt-1 pr-5">{FOOTNOTE}</p>
    </div>
  );
}

function RobotThumb() {
  return (
    <div className="h-full rounded-md border-2 border-[#a9572a] bg-white p-0.5">
      <div className="flex h-full flex-col overflow-hidden bg-[#1c1619] text-[7px] leading-2 font-bold text-[#ffff00]">
        <p className="pt-2 text-center text-[#f01010]">人形机器人</p>
        <ul className="pl-[22px] leading-[9px]">
          <li>■&nbsp; 板块指数：趋势与分时走势</li>
          <li>■&nbsp; 核心个股</li>
          <li>■&nbsp; 负反馈情况</li>
        </ul>
        <div className="flex items-end gap-2 pt-[3px] pl-[9px]">
          <IndexChart thin className="mb-0.5 h-[67px] w-[111px]" />
          <StockChart thin className="h-[67px] w-[99px]" />
        </div>
        <p className="mt-auto pr-5 pb-[7px] text-center">{FOOTNOTE}</p>
      </div>
    </div>
  );
}

const SPACE_LINES: Array<[string, string]> = [
  ['pl-[26px] text-[#f01818]', '• 逻辑与梳理'],
  ['pl-[35px]', '✓ 重要观点，是11月穿越过来板块'],
  ['pl-[35px]', '✓ 板块指数继续看好'],
  ['pl-[26px] text-[#f01818]', '• 最新消息'],
  ['pl-[33px]', '在2025卫星互联网产业生态大会上，垣信卫星与空中客车公司签约'],
  ['pl-[29px]', '“千帆星座”进行了市场合作签约，开展低轨卫星飞机互联合作。'],
  ['pl-[26px] text-[#f01818]', '• 机构观点'],
  ['pl-[34px]', '➢ 商业航天不是是短期主题，而是长期叙事。'],
  ['pl-[34px]', '➢ 短期最大突破点：火箭、太空算力的核心载体。'],
  ['pl-[26px] text-[#f01818]', '• 市场情况'],
  ['pl-[35px]', '今天机会转向航天系'],
  ['pl-[35px]', '逻辑：接下来可回收火箭发射的是长征十二甲、航天八院发射'],
];

function SpaceThumb() {
  return (
    <ThumbFrame title="商业航天板块" titleClass="pl-[18px]">
      <div className="pt-2 text-[6px] leading-[7px] whitespace-nowrap text-[#eee]">
        {SPACE_LINES.map(([cls, text]) => (
          <p key={text} className={cls}>
            {text}
          </p>
        ))}
      </div>
    </ThumbFrame>
  );
}

function SlidePanel() {
  const thumbs = [MarketThumb, MoodThumb, HotspotThumb, RobotThumb, SpaceThumb];
  return (
    <aside className="relative flex w-[323px] shrink-0 flex-col border-r border-[#cfcdd0]">
      <div className="flex h-[57px] items-start pt-[14px] text-xs text-[#222]">
        <a href="#outline" className="ml-[121px] leading-5">
          大纲
        </a>
        <a href="#slides" className="ml-3 flex flex-col items-center leading-5 text-[#b3551d]">
          幻灯片
          <span className="h-0.5 w-[26px] bg-[#a85426]" />
        </a>
        <ChevronLeft className="mt-0.5 mr-4 ml-auto size-4" strokeWidth={1.8} />
      </div>
      <ol className="flex flex-col gap-[17px]">
        {thumbs.map((Thumb, i) => (
          <li key={i} className="flex h-[137px]">
            <span className={`w-[46px] shrink-0 pt-0.5 pl-[26px] text-[13px] ${i === 3 ? 'text-[#a85426]' : 'text-[#333]'}`}>{i + 2}</span>
            <div className={i === 3 ? '-m-[3px] w-[251px]' : 'w-[245px]'}>
              <Thumb />
            </div>
          </li>
        ))}
      </ol>
      <button aria-label="新建幻灯片" className="flex h-12 w-[323px] items-center justify-center pb-2 text-[#111]">
        <Plus className="size-5" strokeWidth={1.8} />
      </button>
      <span className="absolute top-[115px] right-1.5 h-[285px] w-1.5 rounded-full bg-[#c9c7ca]" />
      <div className="absolute top-[548px] left-3.5 flex h-[22px] w-[50px] items-center gap-1.5 bg-white/40 px-1 text-[#333]">
        <span className="h-4 border-l-2 border-dotted border-[#bbb]" />
        <span className="flex size-[15px] -rotate-6 items-center justify-center rounded-sm border-2 border-[#e08870] text-[10px] font-bold text-[#e08870]">S</span>
        <svg viewBox="0 0 10 16" className="ml-auto h-4 w-2.5" fill="none" stroke="currentColor" strokeWidth="1.500" aria-hidden="true">
          <path d="M4 1 H2 V5 H4 M6 1 H8 V5 H6 M2 11 V15 H8 V11" />
        </svg>
      </div>
    </aside>
  );
}

/* ---------- editor ---------- */

const BULLETS = ['板块指数：趋势与分时走势', '核心个股', '负反馈情况'];

function Slide() {
  return (
    <article className="relative flex aspect-video w-full flex-col overflow-hidden bg-[#1c1619] pt-12 font-bold text-[#ffff00]">
      <span className="absolute top-[196px] left-[340px] rotate-12 text-5xl whitespace-nowrap text-[#2b2528]">历史数据仅供参考</span>
      <h1 className="relative pl-[537px] text-[39px] leading-[45px] text-[#ff0000]">人形机器人</h1>
      <ul className="relative pt-px pl-[127px] text-[37px] leading-[45px]">
        {BULLETS.map((text) => (
          <li key={text} className="flex items-center">
            <span className="mr-[23px] size-[22px] bg-[#ffff00]" />
            {text}
          </li>
        ))}
      </ul>
      <div className="relative flex items-end gap-[41px] pt-[23px] pl-[57px]">
        <IndexChart className="mb-[7px] h-[350px] w-[581px]" />
        <StockChart className="h-[350px] w-[516px]" />
      </div>
      <p className="relative mt-4 pl-[367px] text-[35px] leading-[50px]">{FOOTNOTE}</p>
    </article>
  );
}

function Arrow({ d, className = '' }: { d: string; className?: string }) {
  return (
    <svg viewBox="0 0 8 8" className={`size-2 shrink-0 ${className}`} fill="currentColor" aria-hidden="true">
      <path d={d} />
    </svg>
  );
}

function Editor() {
  return (
    <main className="flex min-w-0 flex-1 flex-col">
      <div className="flex flex-1">
        <div className="flex-1 pr-[123px] pl-[123px]">
          <div className="flex h-[53px] items-end pb-1.5">
            <button aria-label="AI 助手" className="flex size-7 items-center justify-center rounded bg-white shadow-sm">
              <AiLogo className="size-4" />
            </button>
          </div>
          <Slide />
        </div>
        <div className="flex w-[14px] flex-col items-center pt-1 text-[#555]">
          <Arrow d="M1 7 L4 1 L7 7 Z" />
          <span className="mt-[239px] h-14 w-2 rounded-full bg-[#c9c7ca]" />
          <Arrow className="mt-auto" d="M1 1 H7 L4 7 Z" />
          <Arrow className="mt-2" d="M1.500 4 L4 0 L6.500 4 Z M1.500 8 L4 4 L6.500 8 Z" />
          <Arrow className="mt-2 mb-2" d="M1.500 0 H6.500 L4 4 Z M1.500 4 H6.500 L4 8 Z" />
        </div>
      </div>
      <div className="flex h-[33px] items-center border-t border-[#c9c7ca] pl-3 text-[13px] text-[#77757a]">
        <span>单击此处添加备注</span>
        <button className="ml-2 flex h-6 items-center gap-1 rounded border border-[#d8d6da] bg-[#f0eef1] px-1.5 text-[#555]">
          <Glyph className="size-3.5" d="M14 20 H3 V3 H21 V10 M7 8 H14 M7 13 H11" accent="M13 18 L21 12 M17 21 L20 18" accentClass="stroke-[#555]" />
          AI 演讲稿
        </button>
      </div>
    </main>
  );
}

function ToolRail() {
  const icons: ReactNode[] = [
    <Glyph key="adjust" className="size-[18px]" d="M1 7 H5 M11 7 H23 M8 4 A3 3.500 0 1 1 7.900 4 M1 17 H13 M19 17 H23 M16 13.500 A3 3.500 0 1 1 15.900 13.500" />,
    <Glyph key="star" className="size-[18px]" d="M12 2 L15 9 L22 9.500 L17 14 L19 21 L12.500 17.500 M12 2 L9 9 L2 9.500 L5 12 M2 15 H8 M3 18 H7 M4 21 H10" />,
    <Glyph key="layer" className="size-[18px]" d="M3 14 V3 H16 V8 M9 8 H22 V20 H9 Z M3 14 H9 M3 17 Q3 21 7 21 M5 19 L7 21 L5 23" />,
    <Glyph key="magic" className="size-[18px]" d="M4 6 L7 3 L21 17 L18 20 Z M18 3 L21 6 L18 8 L16 5 Z M5 15 L8 18 L5 21 L2 18 Z" />,
    <Glyph key="skin" className="size-[18px]" d="M9 21 H6 V12 L2 10 L4 4 L8 3 Q12 8 16 3 L20 4 L22 10 L19 11 M16 13 A3.500 3.500 0 1 1 15.900 13 M18 19 L22 22" />,
    <Glyph key="chart" className="size-[18px]" d="M9 21 H3 V12 H9 V5 M3 12 Q1 4 9 4 H18 Q22 4 22 9 M12 20 Q10 15 12 13 Q14 16 12 20 M16 20 Q15 14 18 10 M16 20 Q21 19 22 14" />,
    <Glyph key="read" className="size-[18px]" d="M11 21 L3 19 V3 L11 6 L21 3 V12 M11 6 V12 M16 12 A4 4 0 1 1 15.900 12 M19 19 L22 22" />,
    <CircleHelp key="help" className="size-[18px]" strokeWidth={1.5} />,
    <MessageSquare key="note" className="size-[17px]" strokeWidth={1.6} />,
    <Ellipsis key="more" className="size-5" strokeWidth={2} />,
  ];
  return (
    <aside className="flex w-[57px] shrink-0 flex-col items-center border-l border-[#cfcdd0] pt-[15px] text-[#333]">
      <Minus className="size-[18px] text-[#777]" strokeWidth={2} />
      <div className="flex flex-col items-center pt-[3px]">
        {icons.map((icon, i) => (
          <button key={i} className="flex h-10 items-center">
            {icon}
          </button>
        ))}
      </div>
    </aside>
  );
}

function StatusBar() {
  return (
    <footer className="flex h-6 items-center border-t border-[#cfcdd0] pr-[17px] pl-3 text-xs whitespace-nowrap text-[#222]">
      <span>幻灯片 5 / 13</span>
      <Glyph className="ml-7 size-4" d="M9 21 H5 V11 H2 V5 L8 3 Q12 8 16 3 L22 5 V9 M13 13 L21 21 M20 12 L12 20" />
      <span className="ml-1">1_Office 主题</span>
      <Glyph className="ml-[30px] size-4" d="M10 21 H3 V3 H20 V9 M7 8 H13 M15 11 A4 4 0 1 1 14.900 11 M18 18 L22 22" />
      <span className="ml-1">校对</span>
      <div className="ml-auto flex items-center">
        <Glyph className="size-4" d="M5 9 H19 Q21 20 12 21 Q3 20 5 9 M8 9 Q8 3 12 4 Q16 3 16 9" />
        <span className="mr-1 ml-1">智能美化</span>
        <Chev />
        <Sep className="mx-3.5 h-4" />
        <Glyph className="size-4" d="M3 5 H12 M15 3 L18 6 L21 3 M3 12 H21 M3 19 H21" />
        <span className="mx-1">备注</span>
        <Chev />
        <Glyph className="ml-[18px] size-4" d="M8 20 H3 V4 H21 V13 M18 16 V22 M15 19 H21" />
        <span className="ml-1">批注</span>
        <Sep className="mr-2 ml-3 h-4" />
        <span className="flex h-[23px] w-6 items-center justify-center rounded bg-[#cfcdd0]">
          <Glyph className="size-4" d="M3 3 H21 V21 H3 Z M8 7 V17" />
        </span>
        <LayoutGrid className="ml-3 size-4" strokeWidth={1.6} />
        <BookOpen className="ml-[17px] size-4" strokeWidth={1.6} />
        <Sep className="mx-2.5 h-4" />
        <span className="flex h-[18px] w-5 items-center justify-center rounded-sm bg-[#dd661b] text-white">
          <Arrow d="M2 0 L7 4 L2 8 Z" />
        </span>
        <Chev className="ml-2" />
        <Sep className="mr-3.5 ml-2.5 h-4" />
        <Glyph className="size-4" d="M3 7 V3 H7 M17 3 H21 V7 M3 17 V21 H7 M17 21 H21 V17 M8 7 H16 V17 H8 Z" />
        <span className="mr-2.5 ml-5">100%</span>
        <Chev />
        <Minus className="ml-4 size-3.5" strokeWidth={2.5} />
        <input
          type="range"
          aria-label="缩放"
          defaultValue={50}
          className="mx-3 h-0.5 w-[106px] appearance-none bg-linear-to-r from-[#35598c] from-50% to-[#a9a7ab] to-50% [&::-webkit-slider-thumb]:size-2.5 [&::-webkit-slider-thumb]:appearance-none [&::-webkit-slider-thumb]:rounded-full [&::-webkit-slider-thumb]:border-2 [&::-webkit-slider-thumb]:border-white [&::-webkit-slider-thumb]:bg-[#777]"
        />
        <Plus className="size-3.5" strokeWidth={2.5} />
      </div>
    </footer>
  );
}

/* ---------- Windows taskbar ---------- */

function TaskbarApp({ children, mark = '' }: { children: ReactNode; mark?: string }) {
  return (
    <span className="ml-5 flex flex-col items-center gap-1 pt-[7px]">
      {children}
      <span className={`h-[3px] rounded-full ${mark}`} />
    </span>
  );
}

function Taskbar() {
  return (
    <div className="flex h-12 items-center bg-linear-to-r from-[#d9ecb4] via-[#d5eaca] via-50% to-[#e4f0a4] pr-5 pl-5 text-[#222]">
      <svg viewBox="0 0 24 24" className="size-6" aria-hidden="true">
        <path d="M0 0 H11 V11 H0 Z M13 0 H24 V11 H13 Z M0 13 H11 V24 H0 Z M13 13 H24 V24 H13 Z" fill="#0f74c8" />
      </svg>
      <Search className="ml-[21px] size-6 -scale-x-100" strokeWidth={2} />
      <TaskbarApp>
        <svg viewBox="0 0 24 24" className="size-6" aria-hidden="true">
          <circle cx="12" cy="13" r="8" fill="none" stroke="#3cae3c" strokeWidth="4" strokeDasharray="42 9" />
          <path d="M6 13 H19" stroke="#3cae3c" strokeWidth="3.500" />
          <path d="M2 20 Q0 9 21 3" fill="none" stroke="#8ed23c" strokeWidth="2" />
        </svg>
      </TaskbarApp>
      <TaskbarApp mark="w-1.5 bg-[#8a9080]">
        <svg viewBox="0 0 24 24" className="size-6" aria-hidden="true">
          <circle cx="12" cy="12" r="11" fill="#fbc116" />
          <path d="M12 12 L2.500 6.500 A11 11 0 0 1 21.500 6.500 Z" fill="#e33b2e" />
          <path d="M12 12 L2.500 6.500 A11 11 0 0 0 12 23 L16 15 Z" fill="#2da94f" />
          <circle cx="12" cy="12" r="5.200" fill="#fff" />
          <circle cx="12" cy="12" r="4" fill="#3f7de8" />
        </svg>
      </TaskbarApp>
      <TaskbarApp mark="w-1.5 bg-[#8a9080]">
        <svg viewBox="0 0 24 24" className="size-6" aria-hidden="true">
          <path d="M12 23 L1 13 Q1 6 7 4 Q12 0 17 4 Q23 6 23 13 Z" fill="#b8242c" />
          <path d="M12 22 L4 11 M12 22 L8 6 M12 22 V4 M12 22 L16 6 M12 22 L20 11" stroke="#fff" strokeWidth="1.300" />
        </svg>
      </TaskbarApp>
      <TaskbarApp mark="w-4 bg-[#0f74c8]">
        <svg viewBox="0 0 26 24" className="h-6 w-[26px]" aria-hidden="true">
          <path d="M1 4 H13 L11 10 L8.500 19 L3 4 M11 9 L17 19 L23.500 4 H17" fill="none" stroke="#dc2c20" strokeWidth="3.500" strokeLinejoin="round" />
        </svg>
      </TaskbarApp>
      <div className="ml-auto flex items-center">
        <ChevronUp className="size-4" strokeWidth={1.8} />
        <span className="relative ml-2">
          <Glyph className="size-[18px]" d="M3 10 Q6 3 13 4 Q18 5 20 9 M20 3 V9 H14 M3 21 V15 H9 M4 16 L10 22" />
          <span className="absolute right-0 bottom-0 size-2 rounded-full bg-[#e01010]" />
        </span>
        <Mic className="ml-2.5 size-[18px]" strokeWidth={1.5} />
        <Glyph className="ml-3.5 size-[18px]" d="M14 5 H3 V17 H21 V12 M8 21 H16 M12 17 V21 M17 3 H22 V9 H17 Z" />
        <Volume2 className="ml-1.5 size-[17px]" strokeWidth={1.5} />
        <div className="ml-3 text-right text-xs leading-4">
          <p>21:53</p>
          <p>2025/12/4</p>
        </div>
        <span className="ml-2 flex size-4 items-center justify-center rounded-full bg-[#0f6fc0] text-[10px] text-white">1</span>
      </div>
    </div>
  );
}

function ShareNotice() {
  return (
    <div className="absolute bottom-[57px] left-[792px] flex h-[42px] w-[337px] items-center border border-[#d0ced2] bg-white px-2.5 text-xs whitespace-nowrap text-[#333] shadow-sm">
      <span className="h-4 w-1.5 border-x border-[#aaa]" />
      <span className="ml-2.5">www.tgb.cn正在共享您的屏幕。</span>
      <button className="ml-auto h-8 w-20 rounded bg-[#1a6fe0] text-white">停止共享</button>
      <button className="ml-2.5 text-[#3a62b0]">隐藏</button>
    </div>
  );
}

function InputMethodBar() {
  return (
    <div className="absolute bottom-[49px] left-[746px] flex h-6 w-[186px] items-center gap-2 border border-[#d0ced2] bg-white pl-[22px] text-[#1260a8]">
      <span className="absolute -top-1.5 -left-4 flex size-[30px] -rotate-6 items-center justify-center rounded-md bg-[#dd5225] text-[26px] leading-none font-bold text-white">S</span>
      <span className="text-sm font-bold">中</span>
      <span className="w-4 text-center text-sm font-bold">°,</span>
      <svg viewBox="0 0 16 16" className="size-4" fill="none" stroke="currentColor" strokeWidth="1.600" aria-hidden="true">
        <rect x="5.500" y="1" width="5" height="8" rx="2.500" fill="currentColor" />
        <path d="M3 7 Q3 12 8 12 Q13 12 13 7 M8 12 V15.500" />
      </svg>
      <svg viewBox="0 0 16 16" className="size-4" aria-hidden="true">
        <rect x="0" y="2" width="16" height="12" rx="2" fill="currentColor" />
        <path d="M3 5.500 H13 M3 8.500 H13" stroke="#fff" strokeWidth="1.500" strokeDasharray="2 1" />
        <path d="M5 11.500 H11" stroke="#fff" strokeWidth="1.300" />
      </svg>
      <svg viewBox="0 0 18 16" className="h-4 w-[18px]" aria-hidden="true">
        <path d="M4 4 L6 3 Q8 6 10 3 L14 4 L16 7 L13 9 V15 H4 V9 L1 7 Z" fill="#a06ae0" />
        <circle cx="15" cy="2.800" r="2.800" fill="#dc4640" />
      </svg>
      <svg viewBox="0 0 16 16" className="size-4" fill="currentColor" aria-hidden="true">
        <rect x="1" y="1.500" width="6" height="6" rx="2" />
        <rect x="9" y="1.500" width="6" height="6" rx="2" />
        <rect x="1" y="9" width="6" height="6" rx="2" />
        <rect x="9" y="9" width="6" height="6" rx="2" />
      </svg>
      <svg viewBox="0 0 18 16" className="h-4 w-4" aria-hidden="true">
        <path d="M1 7 Q8 4 15 3 L16 7 L11 9 L9 8 L5 10 L2 9 Z" fill="#b04c28" />
        <path d="M8 12 L11 10" stroke="#333" strokeWidth="1.200" />
      </svg>
    </div>
  );
}

function BottomControls() {
  return (
    <div className="flex h-45 justify-end pt-[34px] pr-[89px] font-['Noto_Sans_CJK_SC',sans-serif] text-white">
      <button aria-label="辅助触控" className="mr-[454px] flex h-[141px] w-[142px] items-center justify-center rounded-3xl bg-[#0b0b0b]">
        <span className="flex size-[90px] items-center justify-center rounded-full bg-[#262626]">
          <span className="flex size-[76px] items-center justify-center rounded-full bg-[#3c3c3c]">
            <span className="size-[62px] rounded-full bg-[#777578]" />
          </span>
        </span>
      </button>
      <div className="relative w-39">
        <span className="flex size-[42px] items-center justify-center rounded-full bg-[#f60c0c] text-base">111</span>
        <button className="block pt-px pl-8 text-[31px] leading-11 whitespace-nowrap">退出清屏</button>
        <svg viewBox="0 0 38 34" className="absolute top-10 left-[72px] h-[34px] w-[38px]" aria-hidden="true">
          <path d="M0 2 H6 L10 6 H37 L33 24 H9 L5 5 H0 Z" fill="#f9a31a" />
          <path d="M12 11 H32 M13 16 H31" stroke="#fff3d0" strokeWidth="2" />
          <path d="M9 24 H33 V27 H9 Z" fill="#d87c10" />
          <circle cx="13" cy="30" r="3" fill="#f9a31a" />
          <circle cx="29" cy="30" r="3" fill="#f9a31a" />
        </svg>
      </div>
    </div>
  );
}

export default function App() {
  return (
    <div className={`min-h-screen w-full overflow-hidden bg-black ${UI_FONT}`}>
      <DeviceBar />
      <div className="relative bg-[#e6e4e7]">
        <TitleBar />
        <MenuRow />
        <Ribbon />
        <div className="flex">
          <SlidePanel />
          <Editor />
          <ToolRail />
        </div>
        <StatusBar />
        <Taskbar />
        <ShareNotice />
        <InputMethodBar />
      </div>
      <BottomControls />
    </div>
  );
}
